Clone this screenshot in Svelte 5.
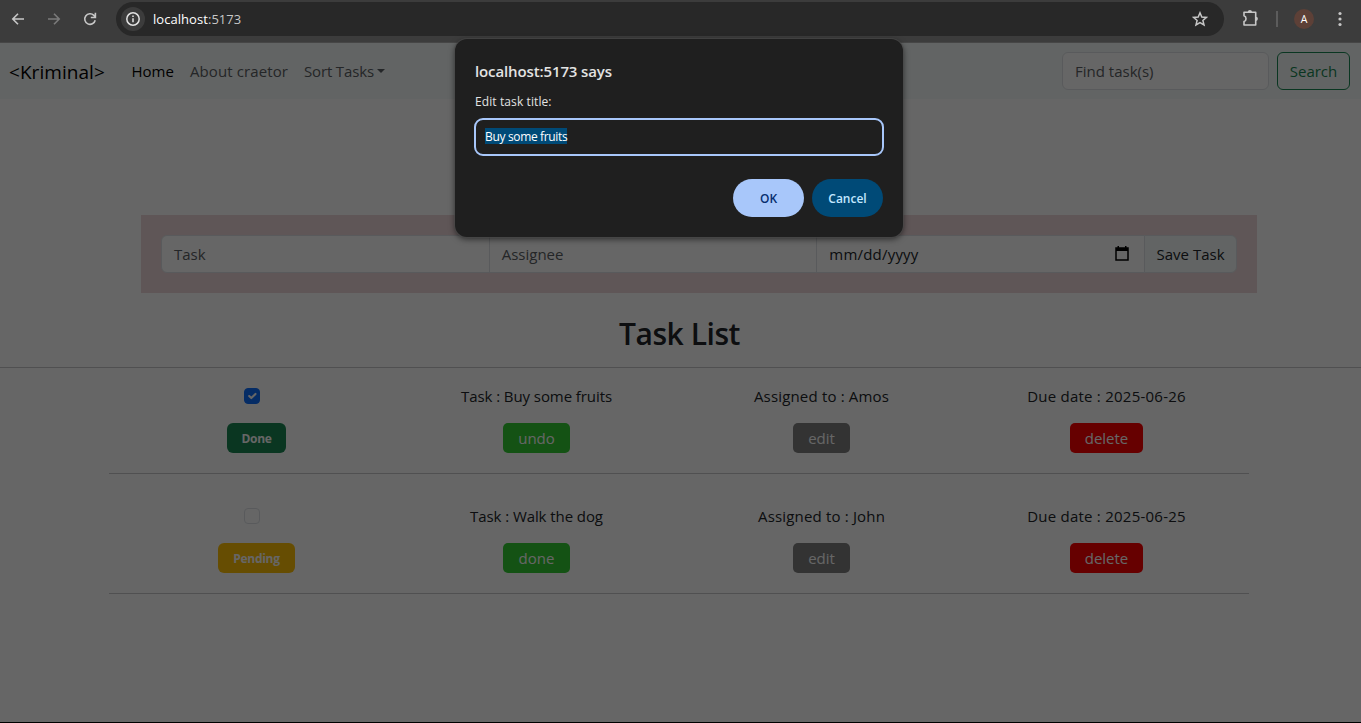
<script>
  const tasks = [
    { title: 'Buy some fruits', assignee: 'Amos', due: '2025-06-26', done: true },
    { title: 'Walk the dog', assignee: 'John', due: '2025-06-25', done: false }
  ];
</script>

<div class="window">
  <header class="toolbar">
    <svg class="ico back" viewBox="0 0 16 16"><path d="M14 8H3M8 2.8 2.8 8 8 13.2" /></svg>
    <svg class="ico forward" viewBox="0 0 16 16"><path d="M2 8h11M8 2.8 13.2 8 8 13.2" /></svg>
    <svg class="ico reload" viewBox="0 0 16 16"><path d="M13.2 9.2A5.3 5.3 0 1 1 11.9 4.4L13.2 5.8M13.4 1.8v4.700H8.800" /></svg>
    <div class="address">
      <span class="site">
        <svg viewBox="0 0 16 16"><circle cx="8" cy="8" r="6.2" /><path d="M8 7.2v4M8 4.5v1.5" /></svg>
      </span>
      <span class="url">localhost<i>:5173</i></span>
      <svg class="star" viewBox="0 0 16 16"><path d="M8 1.8 9.8 6l4.6.4-3.5 3 1.1 4.5L8 11.5l-4 2.4 1.100-4.500-3.500-3L6.200 6Z" /></svg>
    </div>
    <svg class="puzzle" viewBox="0 0 18 18">
      <path d="M3 3.300H14.700V16H3V12.600C5.700 11.800 5.700 7.600 3 6.800Z" />
      <path class="nub" d="M6.800 3a2.100 1.900 0 0 1 4.200 0ZM15 7.700a1.900 2.100 0 0 1 0 4.200Z" />
    </svg>
    <span class="sep"></span>
    <span class="avatar">A</span>
    <svg class="dots" viewBox="0 0 4 16"><circle cx="2" cy="2.500" r="1.600" /><circle cx="2" cy="8" r="1.600" /><circle cx="2" cy="13.500" r="1.600" /></svg>
  </header>

  <main class="page">
    <nav>
      <span class="brand">&lt;Kriminal&gt;</span>
      <span class="link active">Home</span>
      <span class="link about">About craetor</span>
      <span class="link sort">Sort Tasks<b></b></span>
      <span class="find">Find task(s)</span>
      <span class="search">Search</span>
    </nav>

    <section class="form">
      <div class="group">
        <span class="field hint">Task</span>
        <span class="field hint">Assignee</span>
        <span class="field date">mm/dd/yyyy
          <svg viewBox="0 0 14 15"><path d="M1 2h12v12H1Z" fill="none" stroke="#000" stroke-width="1.500" /><path d="M1 2h12v3H1ZM2.500 0h1.500v2H2.500ZM10 0h1.500v2H10Z" /></svg>
        </span>
        <span class="save">Save Task</span>
      </div>
    </section>

    <h2>Task List</h2>

    <section class="list">
      {#each tasks as task}
        <div class="row">
          <div class="cell first">
            <span class="check" class:checked={task.done}>
              {#if task.done}
                <svg viewBox="0 0 20 20"><path d="m6 10 3 3 6-6" /></svg>
              {/if}
            </span>
            <span class="badge" class:ok={task.done}>{task.done ? 'Done' : 'Pending'}</span>
          </div>
          <div class="cell">
            <span class="text name">Task : {task.title}</span>
            <span class="btn toggle">{task.done ? 'undo' : 'done'}</span>
          </div>
          <div class="cell">
            <span class="text who">Assigned to : {task.assignee}</span>
            <span class="btn edit">edit</span>
          </div>
          <div class="cell">
            <span class="text due">Due date : {task.due}</span>
            <span class="btn delete">delete</span>
          </div>
        </div>
      {/each}
    </section>
    <div class="shade"></div>
  </main>

  <div class="dialog">
    <div class="title">localhost:5173 says</div>
    <div class="message">Edit task title:</div>
    <div class="prompt"><mark>Buy some fruits</mark></div>
    <div class="actions">
      <span class="action ok">OK</span>
      <span class="action cancel">Cancel</span>
    </div>
  </div>
</div>

<style>
  .window, .window * { box-sizing: border-box; }
  .window {
    position: relative;
    width: 1361px;
    height: 723px;
    overflow: hidden;
    background: #000;
    font-family: "Open Sans", "Noto Sans", sans-serif;
    font-size: 15px;
    line-height: 24px;
    color: #212529;
    white-space: nowrap;
  }
  svg { display: block; flex: none; }

  .toolbar {
    height: 43px;
    padding: 2px 0 0 10px;
    display: flex;
    align-items: flex-start;
    background: #3c3c3c;
    border-bottom: 1px solid #464646;
  }
  .ico { width: 16px; height: 16px; margin-top: 9px; fill: none; stroke: #c7c7c7; stroke-width: 1.6; }
  .forward { margin-left: 20px; stroke: #7b7b7b; }
  .reload { margin-left: 20px; }
  .address {
    width: 1108px;
    height: 34px;
    margin-left: 18px;
    padding: 0 16px 0 5px;
    border-radius: 17px;
    display: flex;
    align-items: center;
    background: #282828;
  }
  .site { width: 24px; height: 24px; border-radius: 50%; background: #3c3c3c; display: grid; place-items: center; }
  .site svg { width: 16px; height: 16px; fill: none; stroke: #e3e3e3; stroke-width: 1.5; }
  .url { margin-left: 8px; font-size: 13px; letter-spacing: 0.05px; color: #fff; flex: 1; }
  .url i { font-style: normal; color: #c7c7c7; }
  .star { width: 16px; height: 16px; fill: none; stroke: #c7c7c7; stroke-width: 1.5; }
  .puzzle { width: 18px; height: 18px; margin: 7px 0 0 17px; fill: none; stroke: #c7c7c7; stroke-width: 1.6; stroke-linejoin: round; }
  .nub { fill: #c7c7c7; stroke: none; }
  .sep { width: 2px; height: 16px; margin: 9px 0 0 17px; background: #5c5c5c; }
  .avatar {
    width: 20px; height: 20px; margin: 7px 0 0 16px; border-radius: 50%;
    background: #5d4037; color: #fff; font-size: 10.500px; line-height: 20px; text-align: center;
  }
  .dots { width: 4px; height: 16px; margin: 9px 0 0 24px; fill: #c7c7c7; }

  .page { position: relative; height: 679px; background: #fff; }
  .shade { position: absolute; inset: 0; background: rgba(0, 0, 0, 0.6); }

  nav { height: 56px; padding: 0 11px 0 9px; display: flex; align-items: center; background: #f6fbf9; }
  .brand { width: 122.500px; padding-top: 1px; font-size: 19px; letter-spacing: 0.05px; color: #000; }
  .link { color: #5b6064; }
  .active { width: 58.500px; color: #000; }
  .about { width: 114px; letter-spacing: 0.1px; }
  .sort { flex: 1; display: flex; align-items: center; letter-spacing: -0.15px; }
  .sort b { margin-left: 3px; border: 4.5px solid transparent; border-top-color: #5b6064; border-bottom: 0; }
  .find {
    width: 207px; height: 38px; padding: 6px 12px; border: 1px solid #dee2e6; border-radius: 6px;
    background: #fff; color: #5b6064;
  }
  .search {
    width: 73px; height: 38px; margin-left: 8px; padding: 6px 0; text-align: center;
    border: 1px solid #198754; border-radius: 6px; color: #198754;
  }

  .form { width: 1116px; height: 78px; margin: 116px 0 0 141px; padding: 20px 20px; background: #edd7d9; }
  .group { height: 38px; display: flex; }
  .field {
    width: 328.700px; height: 38px; margin-right: -1px; padding: 6px 12px;
    border: 1px solid #dee2e6; background: #fff;
  }
  .field:first-child { border-radius: 6px 0 0 6px; }
  .hint { color: #5b6064; }
  .date { display: flex; justify-content: space-between; padding-right: 15px; letter-spacing: 0.2px; }
  .date svg { width: 14px; height: 15px; margin-top: 4px; }
  .save {
    width: 93px; height: 38px; padding: 6px 0; text-align: center;
    border: 1px solid #dee2e6; border-radius: 0 6px 6px 0; background: #f6fbf9;
  }

  h2 {
    height: 75px; margin: 0; padding: 21px 2px 0 0; text-align: center;
    border-bottom: 1px solid #c8c9ca; font-size: 30px; line-height: 39px; font-weight: 600;
    letter-spacing: -0.45px;
  }

  .list { width: 1140px; margin-left: 109px; }
  .row { height: 120px; display: grid; grid-template-columns: repeat(4, 285px); padding-top: 30px; border-bottom: 1px solid #c8c9ca; }
  .row:first-child { height: 106px; padding-top: 16px; }
  .cell { display: flex; flex-direction: column; align-items: center; }
  .name { letter-spacing: -0.08px; }
  .who { letter-spacing: 0.17px; }
  .due { letter-spacing: 0.24px; }
  .btn {
    height: 30px; margin-top: 15px; padding: 0 14px; border-radius: 5px;
    color: #fff; line-height: 30px; text-align: center;
  }
  .toggle { width: 67px; background: limegreen; }
  .edit { width: 57px; background: gray; }
  .delete { width: 73px; background: red; }
  .check { width: 16px; height: 16px; margin: 4px 0 0 1px; border: 1px solid #dee2e6; border-radius: 4px; }
  .checked { border-color: #0d6efd; background: #0d6efd; }
  .check svg { width: 14px; height: 14px; fill: none; stroke: #fff; stroke-width: 3; stroke-linecap: round; stroke-linejoin: round; }
  .badge {
    width: 77px; height: 30px; margin: 19px 0 0 10px; border-radius: 6px; text-align: center;
    font-size: 12px; font-weight: 700; line-height: 31px; letter-spacing: -0.3px; color: #fff; background: #ffc107;
  }
  .badge.ok { width: 59px; background: #198754; }

  .dialog {
    position: absolute; left: 455px; top: 39px; width: 448px; height: 198px;
    padding: 20px 19px; border-radius: 12px; background: #1f1f1f; color: #e3e3e3;
    box-shadow: 0 0 0 1px rgba(75, 75, 75, 0.6), 0 2px 6px rgba(0, 0, 0, 0.6);
  }
  .title { padding-left: 1px; font-size: 15px; font-weight: 600; line-height: 24px; letter-spacing: -0.12px; }
  .message { margin-top: 9px; padding-left: 1px; font-size: 12px; line-height: 20px; letter-spacing: 0.1px; }
  .prompt {
    height: 38px; margin-top: 6px; padding: 8px 9px; border: 2px solid #a8c7fa; border-radius: 9px;
    font-size: 12px; line-height: 18px;
  }
  .prompt mark { display: inline-block; height: 16px; background: #004a77; color: #fff; letter-spacing: -0.34px; }
  .actions { margin-top: 23px; padding-right: 1px; display: flex; justify-content: flex-end; gap: 8px; }
  .action { width: 71px; height: 38px; border-radius: 19px; font-size: 12px; font-weight: 600; line-height: 39.500px; text-align: center; }
  .action.ok { background: #a8c7fa; color: #062e6f; }
  .cancel { background: #004a77; color: #c2e7ff; }
</style>
